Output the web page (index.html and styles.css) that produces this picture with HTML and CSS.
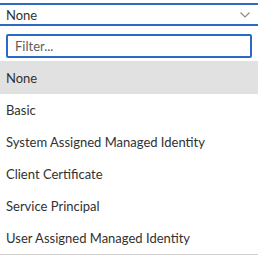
FILE: index.html
```html
<!DOCTYPE html>
<html lang="en">
<head>
  <meta charset="UTF-8" />
  <title>Authentication dropdown</title>
  <link rel="stylesheet" href="styles.css">
</head>
<body>

<!-- select field -->
<div class="select">
  <span class="select-value">None</span>
  <svg class="chevron" width="10" height="6" viewBox="0 0 10 6">
    <path d="M0.5 0.5 L5 5 L9.5 0.5" fill="none" stroke="#8a8886" stroke-width="1.1"/>
  </svg>
</div>

<!-- dropdown panel -->
<div class="panel">
  <div class="filter-wrap">
    <input class="filter" type="text" placeholder="Filter...">
  </div>
  <ul class="options">
    <li class="option selected">None</li>
    <li class="option">Basic</li>
    <li class="option">System Assigned Managed Identity</li>
    <li class="option">Client Certificate</li>
    <li class="option">Service Principal</li>
    <li class="option">User Assigned Managed Identity</li>
  </ul>
</div>

</body>
</html>
```

FILE: styles.css
```css
/* ─── page base ─────────────────────────────────────────── */
body {
  margin: 0;
  font-family: Lato, "Open Sans", sans-serif;
  font-size: 13px;
  color: #323130;
  background: #fff;
}

/* ─── select field ──────────────────────────────────────── */
.select {
  margin-top: 3px;
  height: 19px;
  border-top: 2px solid #2b6bc4;
  border-bottom: 2px solid #2b6bc4;
  display: flex;
  align-items: center;
  justify-content: space-between;
  padding: 0 8px 0 6px;
}

.chevron {
  display: block;
}

/* ─── panel ─────────────────────────────────────────────── */
.panel {
  border-bottom: 1px solid #d2d0ce;
}

.filter-wrap {
  padding: 8px 6px 3px;
}

.filter {
  box-sizing: border-box;
  display: block;
  width: 100%;
  height: 24px;
  margin: 0;
  padding: 0 7px;
  border: 2px solid #2b6bc4;
  border-radius: 2px;
  font: inherit;
  color: #323130;
  outline: none;
}

.filter::placeholder {
  color: #605e5c;
}

/* ─── options ───────────────────────────────────────────── */
.options {
  list-style: none;
  margin: 0;
  padding: 0;
}

.option {
  height: 32px;
  display: flex;
  align-items: center;
  padding: 0 6px;
}

.option.selected {
  background: #e1e1e1;
  height: 33px;
}
```
